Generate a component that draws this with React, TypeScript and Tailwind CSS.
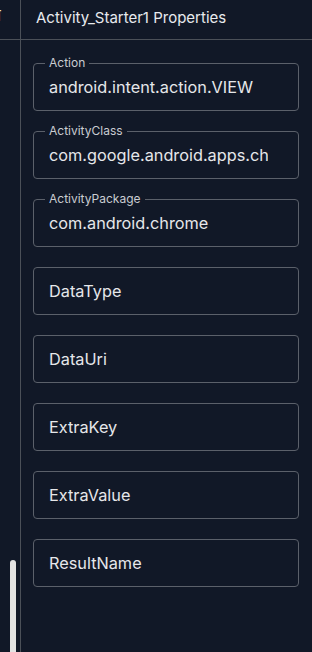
const fields: { label: string; value?: string }[] = [
  { label: "Action", value: "android.intent.action.VIEW" },
  { label: "ActivityClass", value: "com.google.android.apps.chrome.Main" },
  { label: "ActivityPackage", value: "com.android.chrome" },
  { label: "DataType" },
  { label: "DataUri" },
  { label: "ExtraKey" },
  { label: "ExtraValue" },
  { label: "ResultName" },
];

function PropField({ label, value }: { label: string; value?: string }) {
  const hasValue = value !== undefined;
  return (
    <div className="relative h-[48px] rounded-[4px] border border-[#5b606a] flex items-center">
      {hasValue && (
        <span className="absolute -top-[9px] left-[11px] px-[4px] bg-[#111827] text-[12px] leading-[16px] text-[#c9ccd1]">
          {label}
        </span>
      )}
      <div className="ml-[15px] w-[219px] overflow-hidden whitespace-nowrap text-[16.3px] leading-[20px] text-[#e6e7ea]">
        {hasValue ? value : label}
      </div>
    </div>
  );
}

export default function App() {
  return (
    <div
      className="w-[312px] h-[652px] bg-[#111827] flex overflow-hidden"
      style={{ fontFamily: "Inter, 'Noto Sans', sans-serif" }}
    >
      {/* 왼쪽 트리 패널 (잘린 부분) */}
      <div className="w-[21px] shrink-0 border-r border-[#4b5058] flex flex-col">
        <div className="h-[40px] border-b border-[#4b5058] relative overflow-hidden">
          <span className="absolute top-[6px] -left-[3px] text-[15px] leading-[20px] font-medium text-[#f1e6c8]">ī</span>
        </div>
        <div className="flex-1 flex flex-col justify-end pl-[10px]">
          <div className="w-[6px] h-[92px] rounded-t-[3px] bg-[#e3e3e3]" />
        </div>
      </div>

      <div className="flex-1 flex flex-col">
        <div className="h-[40px] border-b border-[#4b5058] flex items-center pl-[15px] pb-[3px] text-[15px] text-[#e8eaee]">
          Activity_Starter1 Properties
        </div>
        <div className="flex flex-col gap-[20px] pt-[23px] pl-[12px] pr-[13px]">
          {fields.map((f) => (
            <PropField key={f.label} label={f.label} value={f.value} />
          ))}
        </div>
      </div>
    </div>
  );
}
